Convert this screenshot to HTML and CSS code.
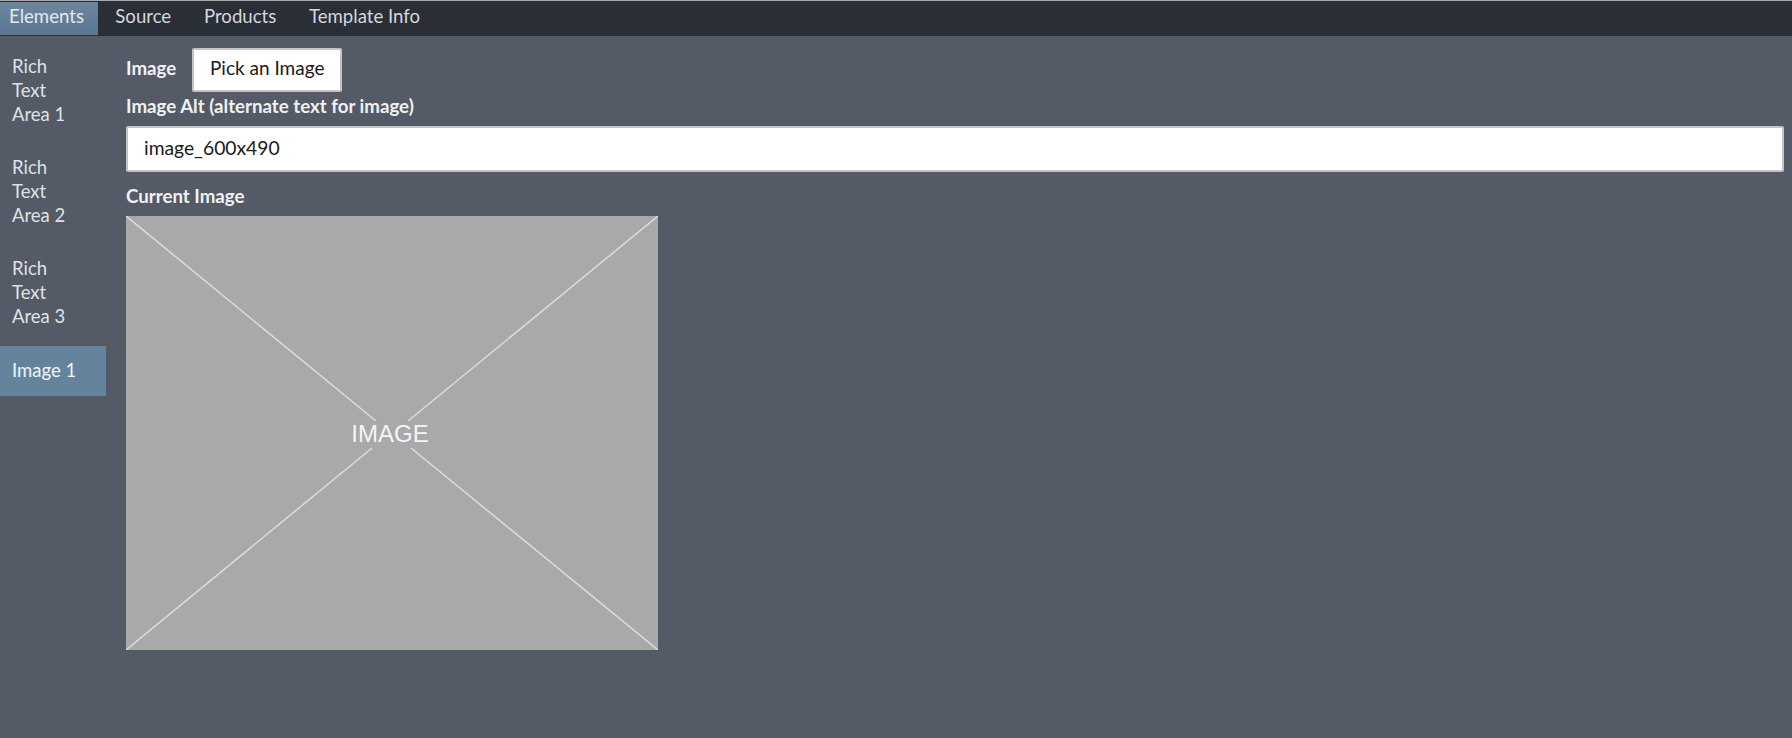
FILE: index.html
```html
<!DOCTYPE html>
<html>
<head>
    <link rel="stylesheet" href="styles.css">
</head>
<body>
    <nav class="tabs">
        <a class="tab tab--active">Elements</a>
        <a class="tab">Source</a>
        <a class="tab">Products</a>
        <a class="tab">Template Info</a>
    </nav>
    <div class="editor">
        <ul class="side">
            <li class="side__item">Rich Text Area 1</li>
            <li class="side__item">Rich Text Area 2</li>
            <li class="side__item">Rich Text Area 3</li>
            <li class="side__item side__item--active">Image 1</li>
        </ul>
        <div class="panel">
            <div class="pick-row">
                <label class="field-label pick-label">Image</label>
                <button class="pick-btn">Pick an Image</button>
            </div>
            <label class="field-label alt-label">Image Alt (alternate text for image)</label>
            <input class="alt-input" type="text" value="image_600x490">
            <label class="field-label current-label">Current Image</label>
            <svg class="placeholder" width="532" height="434" viewBox="0 0 532 434">
                <rect width="532" height="434" fill="#a9a9a9"/>
                <g stroke="#dcdcdc" stroke-width="1.5">
                    <line x1="0" y1="0" x2="250" y2="205"/>
                    <line x1="532" y1="0" x2="282" y2="205"/>
                    <line x1="0" y1="434" x2="246" y2="232"/>
                    <line x1="532" y1="434" x2="285" y2="232"/>
                </g>
                <text class="placeholder__text" x="264" y="225.5" text-anchor="middle">IMAGE</text>
            </svg>
        </div>
    </div>
</body>
</html>
```
FILE: styles.css
```css
html, body {
    margin: 0;
    height: 100%;
}

body {
    background: #545b67;
    font-family: 'Lato', sans-serif;
    font-size: 19px;
    color: #e6e8ea;
    overflow: hidden;
}

.tabs {
    display: flex;
    height: 33px;
    padding: 1px 0;
    background: #2a2e37;
    border-top: 1px solid #a7a9ad;
}

.tab {
    padding: 0 16.4px;
    font-size: 18.6px;
    line-height: 28px;
    color: #d5d8dc;
}

.tab--active {
    padding: 0 14px 0 9px;
    margin-right: 1px;
    color: #e6e8ea;
    background: linear-gradient(#6c879e, #5a7690);
}

.editor {
    display: flex;
    align-items: flex-start;
}

.side {
    width: 106px;
    margin: 0 20px 0 0;
    padding: 7px 0 0;
    list-style: none;
    flex-shrink: 0;
}

.side__item {
    padding: 11px 30px 13px 12px;
    margin-bottom: 5px;
    font-size: 18.5px;
    line-height: 24px;
    color: #dfe2e5;
}

.side__item--active {
    padding: 12px 12px 14px;
    margin-bottom: 0;
    background: #64849e;
    color: #f2f4f5;
}

.panel {
    flex: 1;
    padding: 12px 8px 0 0;
    display: flex;
    flex-direction: column;
    align-items: flex-start;
}

.pick-row {
    display: flex;
    align-items: center;
    gap: 16px;
}

.field-label {
    font-weight: 700;
    color: #f0f1f3;
    font-size: 18.7px;
}

.pick-label {
    padding-bottom: 4px;
}

.pick-btn {
    width: 150px;
    height: 44px;
    padding: 0 0 5px;
    background: #fff;
    border: 2px solid #c4c4c6;
    border-radius: 2px;
    font: inherit;
    color: #1a1a1a;
}

.alt-label {
    margin-top: 2px;
    line-height: 24px;
}

.alt-input {
    width: 100%;
    height: 46px;
    margin-top: 8px;
    padding: 0 16px 4px;
    box-sizing: border-box;
    background: #fff;
    border: 2px solid #c4c4c6;
    border-radius: 2px;
    font: inherit;
    font-size: 19.3px;
    color: #1a1a1a;
}

.current-label {
    margin-top: 12px;
    line-height: 24px;
}

.placeholder {
    display: block;
    margin-top: 8px;
}

.placeholder__text {
    font-family: 'Liberation Sans', sans-serif;
    font-size: 24px;
    fill: #f5f5f5;
}
```
